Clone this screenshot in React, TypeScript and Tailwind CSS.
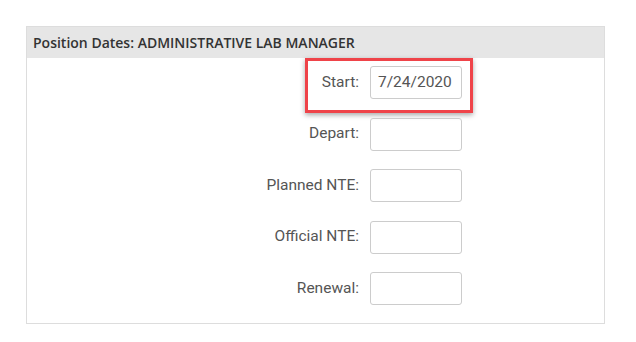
import React from "react";

const rows = [
  { label: "Start:", value: "7/24/2020" },
  { label: "Depart:", value: "" },
  { label: "Planned NTE:", value: "" },
  { label: "Official NTE:", value: "" },
  { label: "Renewal:", value: "" },
];

export default function App() {
  return (
    <div className="w-[636px] h-[342px] bg-white pt-[26px] pl-[26px]">
      <div className="w-[579px] border border-[#dddddd]">
        <div className="h-[31px] bg-[#e6e6e6] flex items-center pl-[6px] text-[14px] font-semibold text-[#333333]" style={{ fontFamily: '"Open Sans", sans-serif' }}>
          Position Dates: ADMINISTRATIVE LAB MANAGER
        </div>
        <div className="flex flex-col gap-[18.5px] pt-[8px] pb-[18px]" style={{ fontFamily: 'Roboto, sans-serif' }}>
          {rows.map((r, i) => (
            <div key={r.label} className="relative flex items-center">
              <div className="w-[343px] text-right text-[15.5px] text-[#555555] pr-[11px]">{r.label}</div>
              <div className="w-[92px] h-[33px] border border-[#cccccc] rounded-[3px] flex items-center pl-[7px] text-[15.5px] text-[#555555]">
                {r.value}
              </div>
              {i === 0 && (
                <div className="absolute left-[278px] top-[-8px] w-[168px] h-[55px] border-[3px] border-[#ef4349] shadow-[0_2px_5px_rgba(0,0,0,0.35)]" />
              )}
            </div>
          ))}
        </div>
      </div>
    </div>
  );
}
